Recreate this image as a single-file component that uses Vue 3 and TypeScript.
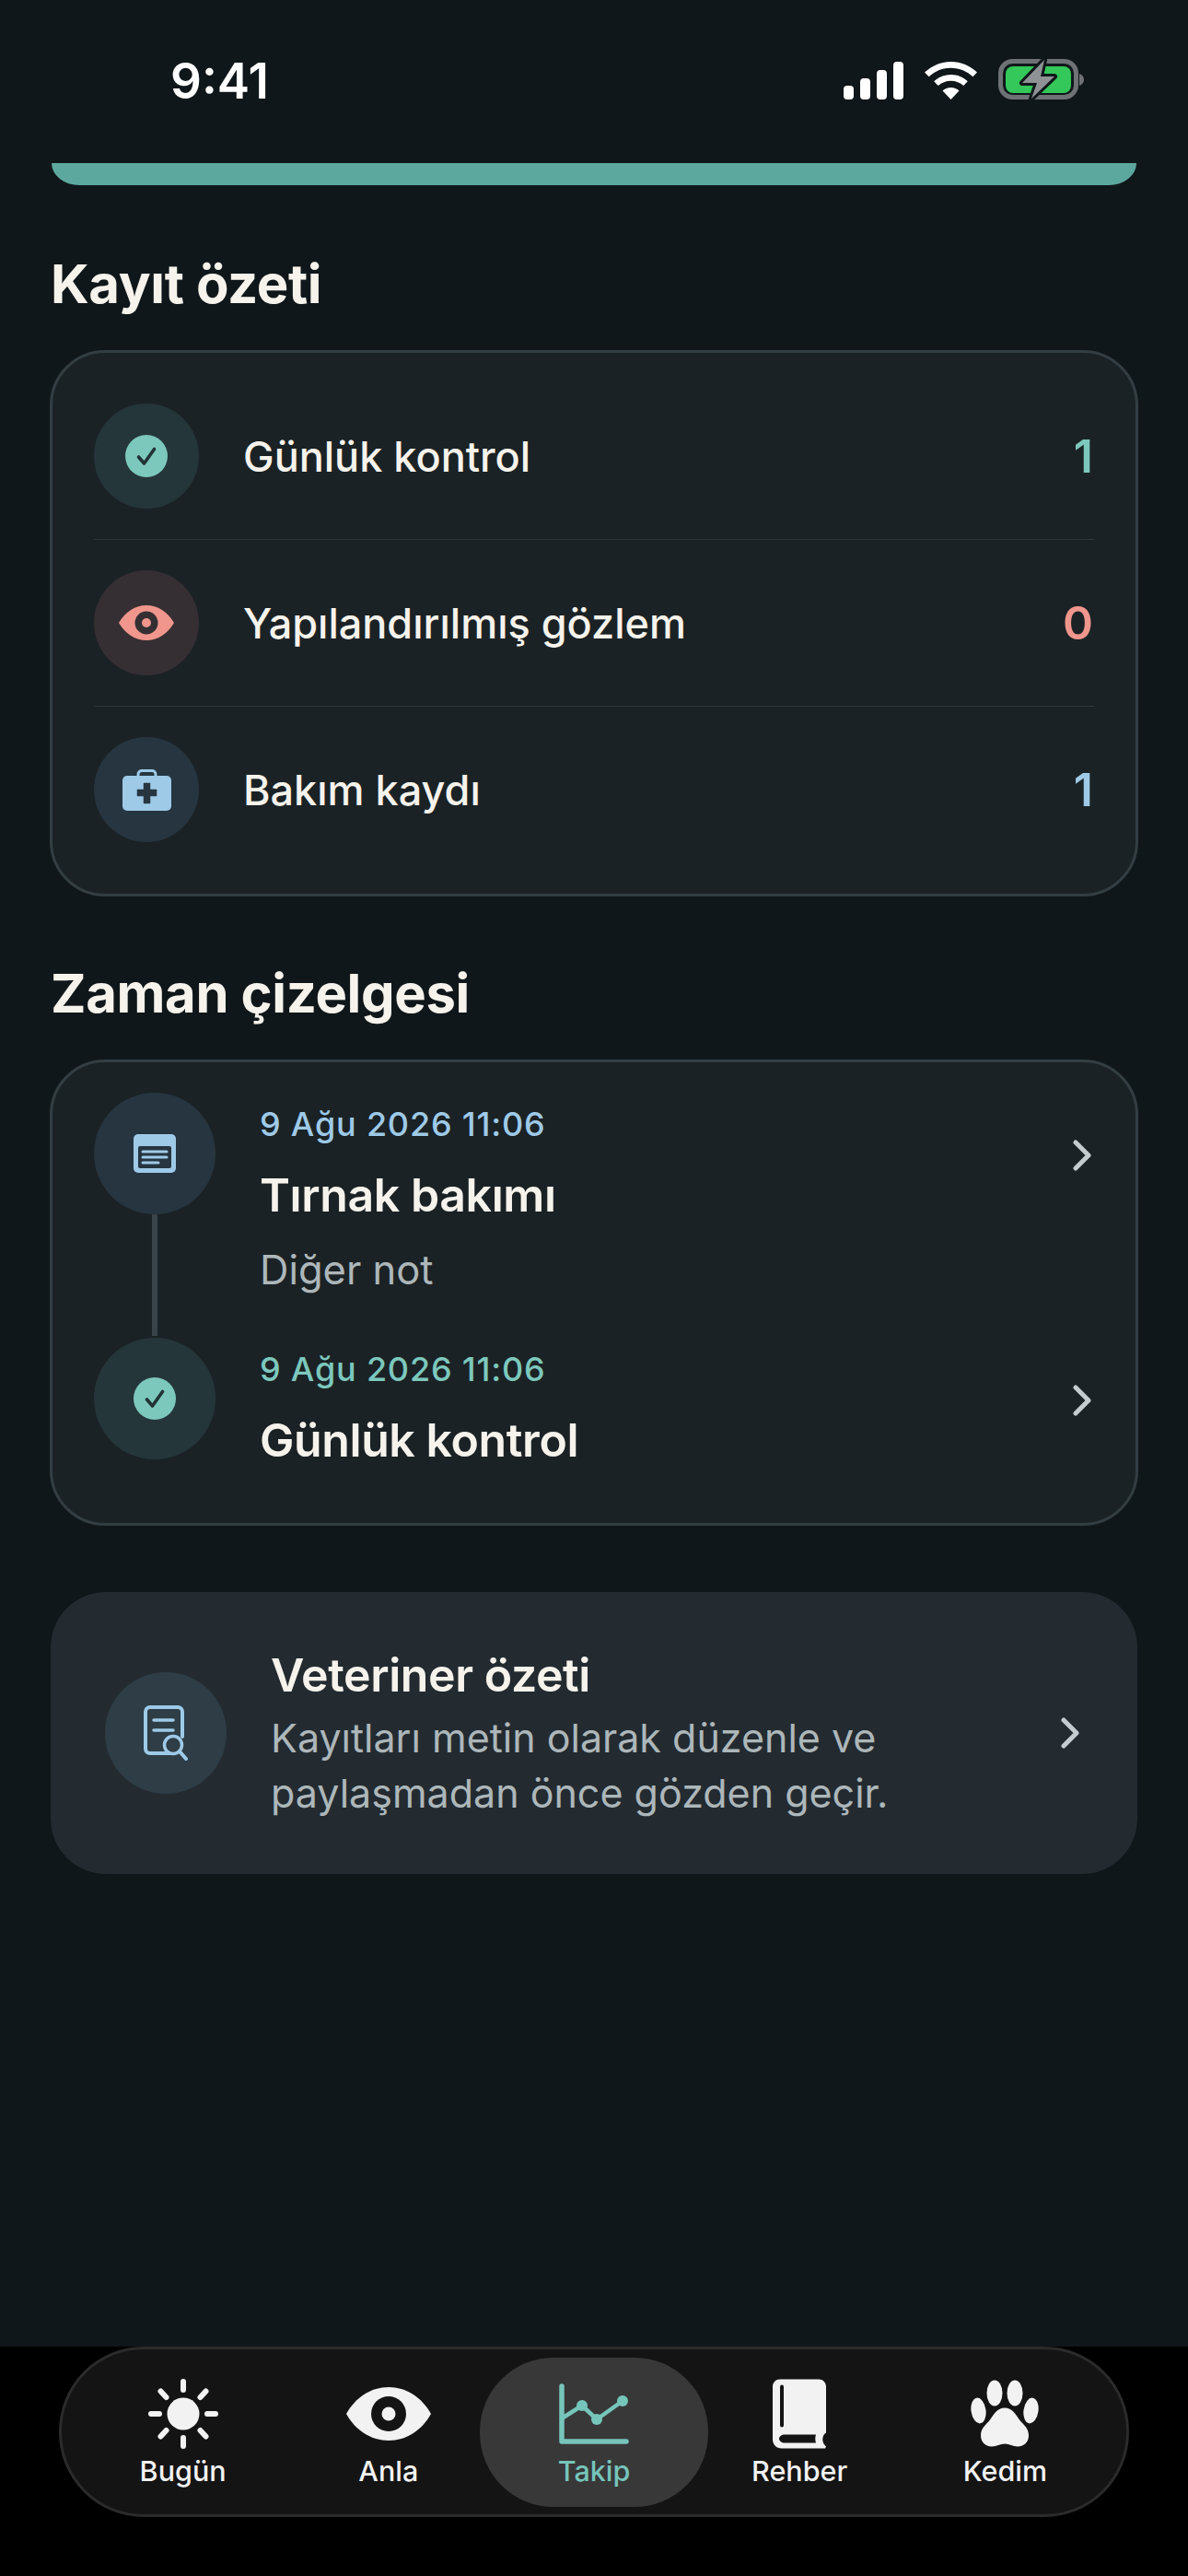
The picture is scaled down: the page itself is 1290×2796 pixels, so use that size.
<script setup lang="ts">
const summary = [
  { label: 'Günlük kontrol', count: 1, tone: 'teal', icon: 'check' },
  { label: 'Yapılandırılmış gözlem', count: 0, tone: 'red', icon: 'eye' },
  { label: 'Bakım kaydı', count: 1, tone: 'blue', icon: 'case' },
]
</script>

<template>
  <div class="page">
    <header class="status">
      <span class="time">9:41</span>
      <div class="status-icons">
        <svg class="signal" width="65" height="41" viewBox="0 0 65 41">
          <rect x="0" y="26" width="11" height="15" rx="4" />
          <rect x="18" y="18" width="11" height="23" rx="4" />
          <rect x="36" y="9" width="11" height="32" rx="4" />
          <rect x="54" y="0" width="11" height="41" rx="4" />
        </svg>
        <svg class="wifi" width="57" height="41" viewBox="0 0 57 41">
          <path d="M28.500 0C17.500 0 7.600 4.300 0 11.500L4.600 16.300C10.800 10.400 19.200 6.800 28.500 6.800S46.200 10.400 52.400 16.300L57 11.500C49.400 4.300 39.500 0 28.500 0Z" />
          <path d="M28.500 14C21.400 14 15 16.800 10.200 21.300L14.800 26.100C18.400 22.700 23.200 20.700 28.500 20.700S38.600 22.700 42.200 26.100L46.800 21.300C42 16.800 35.600 14 28.500 14Z" />
          <path d="M28.500 28C25 28 21.900 29.300 19.500 31.500L28.500 41L37.500 31.500C35.100 29.300 32 28 28.500 28Z" />
        </svg>
        <svg class="battery" width="93" height="44" viewBox="0 0 93 44">
          <rect x="2.500" y="2.500" width="82" height="39" rx="13" fill="none" stroke="#6f7274" stroke-width="5" />
          <rect x="8" y="8" width="71" height="29" rx="8" fill="#34c759" />
          <path d="M88 16C91 17 93 19.500 93 22.500S91 28 88 29Z" fill="#6f7274" />
          <path d="M50 1L26 26H42L36 43L61 19H46Z" fill="#8f9294" stroke="#10171a" stroke-width="6" stroke-linejoin="round" paint-order="stroke" />
        </svg>
      </div>
    </header>

    <main class="content">
      <div class="hero-edge"></div>

      <h2 class="section-title">Kayıt özeti</h2>
      <section class="card summary">
        <div v-for="row in summary" :key="row.label" class="sum-row">
          <div class="sum-icon" :class="'bg-' + row.tone">
            <svg v-if="row.icon === 'check'" width="46" height="46" viewBox="0 0 46 46">
              <circle cx="23" cy="23" r="23" fill="#7cc8bd" />
              <path d="M14.500 24L20.500 31L31.500 15.500" fill="none" stroke="#223236" stroke-width="3.600" stroke-linecap="round" stroke-linejoin="round" />
            </svg>
            <svg v-else-if="row.icon === 'eye'" width="60" height="38" viewBox="0 0 60 38">
              <path d="M0 19C7 7 18 0 30 0S53 7 60 19C53 31 42 38 30 38S7 31 0 19Z" fill="#f0968c" />
              <circle cx="30" cy="19" r="12.500" fill="#352f33" />
              <circle cx="30" cy="19" r="5" fill="#f0968c" />
            </svg>
            <svg v-else width="53" height="45" viewBox="0 0 53 45">
              <path d="M17 9V5.500C17 3 19 1.500 21 1.500H32C34 1.500 36 3 36 5.500V9" fill="none" stroke="#9ecae8" stroke-width="3" />
              <rect x="0" y="7" width="53" height="38" rx="5" fill="#9ecae8" />
              <path d="M23 15H30V22H37V29H30V37H23V29H16V22H23Z" fill="#263540" stroke="#263540" stroke-width="0.500" stroke-linejoin="round" />
            </svg>
          </div>
          <span class="sum-label">{{ row.label }}</span>
          <span class="sum-count" :class="'fg-' + row.tone">{{ row.count }}</span>
        </div>
      </section>

      <h2 class="section-title">Zaman çizelgesi</h2>
      <section class="card timeline">
        <div class="tl-row tl-first">
          <div class="tl-rail">
            <div class="tl-icon bg-blue">
              <svg width="46" height="42" viewBox="0 0 46 42">
                <rect x="0" y="0" width="46" height="42" rx="5" fill="#9ecae8" />
                <rect x="5" y="13" width="36" height="24" rx="2" fill="#263540" />
                <path d="M10 19H36M10 25H36M10 31H27" stroke="#9ecae8" stroke-width="3" stroke-linecap="round" />
              </svg>
            </div>
            <div class="tl-line"></div>
          </div>
          <div class="tl-text">
            <div class="tl-date fg-blue">9 Ağu 2026 11:06</div>
            <div class="tl-title">Tırnak bakımı</div>
            <div class="tl-sub">Diğer not</div>
          </div>
          <svg class="chevron" width="22" height="34" viewBox="0 0 22 34"><path d="M4 3L18 17L4 31" /></svg>
        </div>
        <div class="tl-row">
          <div class="tl-rail">
            <div class="tl-icon bg-teal">
              <svg width="46" height="46" viewBox="0 0 46 46">
                <circle cx="23" cy="23" r="23" fill="#7cc8bd" />
                <path d="M14.500 24L20.500 31L31.500 15.500" fill="none" stroke="#223236" stroke-width="3.600" stroke-linecap="round" stroke-linejoin="round" />
              </svg>
            </div>
          </div>
          <div class="tl-text">
            <div class="tl-date fg-teal">9 Ağu 2026 11:06</div>
            <div class="tl-title">Günlük kontrol</div>
          </div>
          <svg class="chevron" width="22" height="34" viewBox="0 0 22 34"><path d="M4 3L18 17L4 31" /></svg>
        </div>
      </section>

      <section class="vet">
        <div class="vet-icon">
          <svg width="48" height="60" viewBox="0 0 48 60">
            <path d="M30 52H7C4 52 2 50 2 47V7C2 4 4 2 7 2H37C40 2 42 4 42 7V34" fill="none" stroke="#9ecae8" stroke-width="4" stroke-linecap="round" />
            <path d="M11 16H32M11 27H32" stroke="#9ecae8" stroke-width="3.500" stroke-linecap="round" />
            <circle cx="32" cy="43" r="9.500" fill="#2e3d46" stroke="#9ecae8" stroke-width="3.500" />
            <path d="M39 50L46 58" stroke="#9ecae8" stroke-width="4" stroke-linecap="round" />
          </svg>
        </div>
        <div class="vet-text">
          <div class="vet-title">Veteriner özeti</div>
          <div class="vet-desc">Kayıtları metin olarak düzenle ve paylaşmadan önce gözden geçir.</div>
        </div>
        <svg class="chevron" width="22" height="34" viewBox="0 0 22 34"><path d="M4 3L18 17L4 31" /></svg>
      </section>
    </main>

    <nav class="tabbar">
      <div class="tabs">
        <div class="tab">
          <svg width="76" height="76" viewBox="0 0 76 76" class="ic">
            <circle cx="38" cy="38" r="17.500" fill="#f2f2f2" />
            <path d="M38 3V12M38 64V73M3 38H12M64 38H73M13.500 13.500L19.500 20M56.500 56L62.500 62.500M62.500 13.500L56.500 20M19.500 56L13.500 62.500" stroke="#f2f2f2" stroke-width="6" stroke-linecap="round" />
          </svg>
          <span>Bugün</span>
        </div>
        <div class="tab">
          <svg width="92" height="58" viewBox="0 0 92 58" class="ic">
            <path d="M0 29C10 11 27 0 46 0S82 11 92 29C82 47 65 58 46 58S10 47 0 29Z" fill="#f2f2f2" />
            <circle cx="46" cy="29" r="19" fill="#141414" />
            <circle cx="46" cy="29" r="7.500" fill="#f2f2f2" />
          </svg>
          <span>Anla</span>
        </div>
        <div class="tab active">
          <svg width="76" height="66" viewBox="0 0 76 66" class="ic">
            <path d="M3 3V63H73" fill="none" stroke="#76c5bb" stroke-width="5.500" stroke-linecap="round" stroke-linejoin="round" />
            <path d="M3 38L25 24L41 39L69 19" fill="none" stroke="#76c5bb" stroke-width="4.500" stroke-linecap="round" stroke-linejoin="round" />
            <circle cx="25" cy="24" r="6" fill="#76c5bb" />
            <circle cx="41" cy="39" r="6" fill="#76c5bb" />
            <circle cx="69" cy="19" r="6" fill="#76c5bb" />
          </svg>
          <span>Takip</span>
        </div>
        <div class="tab">
          <svg width="58" height="75" viewBox="0 0 58 75" class="ic">
            <path d="M8 0H50C54.500 0 58 3.500 58 8V58C53 61 53 69 58 73L57 75H10C4 75 0 71 0 65V8C0 3.500 3.500 0 8 0Z" fill="#f2f2f2" />
            <rect x="8" y="6" width="4" height="46" rx="2" fill="#141414" />
            <path d="M13 60H47C46 63 46 66 47 69H13C10 69 7 67 7 64.500S10 60 13 60Z" fill="#141414" />
          </svg>
          <span>Rehber</span>
        </div>
        <div class="tab">
          <svg width="74" height="73" viewBox="0 0 74 73" class="ic">
            <ellipse cx="8.500" cy="33" rx="8" ry="14" fill="#f2f2f2" transform="rotate(-8 8.500 33)" />
            <ellipse cx="26" cy="14" rx="8.500" ry="14" fill="#f2f2f2" />
            <ellipse cx="48" cy="14" rx="8.500" ry="14" fill="#f2f2f2" />
            <ellipse cx="65.500" cy="33" rx="8" ry="14" fill="#f2f2f2" transform="rotate(8 65.500 33)" />
            <path d="M37 30C45 30 49 37 53 43C58 49 63 52 63 60C63 68 57 72 51 72C46 72 42 69 37 69S28 72 23 72C17 72 11 68 11 60C11 52 16 49 21 43C25 37 29 30 37 30Z" fill="#f2f2f2" />
          </svg>
          <span>Kedim</span>
        </div>
      </div>
    </nav>
  </div>
</template>

<style>
html, body { margin: 0; background: #10171a; }
</style>

<style scoped>
.page {
  width: 1290px;
  height: 2796px;
  display: flex;
  flex-direction: column;
  background: #10171a;
  font-family: Inter, "Noto Sans", sans-serif;
  color: #f6f3ec;
  overflow: hidden;
}
.status {
  height: 177px;
  flex: none;
  position: relative;
  display: flex;
  justify-content: space-between;
  padding: 66px 113px 0 185px;
  box-sizing: border-box;
}
.time {
  font-size: 53px;
  line-height: 44px;
  font-weight: 600;
  color: #fff;
}
.status-icons { display: flex; align-items: flex-end; height: 42px; }
.signal, .wifi { fill: #fff; }
.wifi { margin-left: 23px; }
.battery { margin-left: 23px; }

.content { flex: 1; padding: 0 55px; }
.hero-edge {
  height: 24px;
  margin: 0 1px;
  background: #5ca89f;
  border-radius: 0 0 30px 30px / 0 0 24px 24px;
}
.section-title {
  margin: 71px 0 36px;
  font-size: 58px;
  line-height: 72px;
  font-weight: 700;
  letter-spacing: -0.35px;
  color: #f6f3ec;
}
.card {
  background: #1b2225;
  border: 3px solid #333e43;
  border-radius: 60px;
  box-sizing: border-box;
  margin: 0 -1px;
}
.summary { padding: 22px 45px 23px; margin-bottom: -2px; }
.sum-row {
  height: 180px;
  display: flex;
  align-items: center;
}
.sum-row + .sum-row { border-top: 1px solid #2f383c; }
.sum-icon {
  width: 114px;
  height: 114px;
  border-radius: 50%;
  display: flex;
  align-items: center;
  justify-content: center;
  flex: none;
}
.bg-teal { background: #25363a; }
.bg-red { background: #352f33; }
.bg-blue { background: #263540; }
.fg-teal { color: #7cc8bd; }
.fg-red { color: #f0968c; }
.fg-blue { color: #9ecae8; }
.sum-label {
  flex: 1;
  margin-left: 48px;
  font-size: 45px;
  font-weight: 500;
}
.sum-count {
  font-size: 50px;
  font-weight: 600;
  margin-right: 1px;
}

.timeline { padding: 33px 47px 60px 45px; }
.tl-row { display: flex; align-items: flex-start; }
.tl-first { height: 266px; }
.tl-rail {
  width: 132px;
  flex: none;
  display: flex;
  flex-direction: column;
  align-items: center;
}
.tl-icon {
  width: 132px;
  height: 132px;
  border-radius: 50%;
  display: flex;
  align-items: center;
  justify-content: center;
}
.tl-line { width: 6px; height: 132px; background: #39444a; }
.tl-text { flex: 1; margin-left: 48px; padding-top: 12px; }
.tl-date {
  font-size: 36px;
  line-height: 44px;
  font-weight: 500;
  letter-spacing: 0.8px;
}
.tl-title {
  margin-top: 25px;
  font-size: 50px;
  line-height: 60px;
  font-weight: 600;
  letter-spacing: -0.4px;
}
.tl-sub {
  margin-top: 23px;
  font-size: 43.500px;
  line-height: 56px;
  color: #adb7ba;
}
.chevron { flex: none; fill: none; stroke: #c3cccf; stroke-width: 5; stroke-linecap: round; stroke-linejoin: round; }
.tl-row .chevron { margin-top: 51px; }

.vet {
  margin-top: 72px;
  height: 306px;
  box-sizing: border-box;
  background: #232b31;
  border-radius: 60px;
  display: flex;
  align-items: center;
  padding: 0 62px 0 59px;
}
.vet-icon {
  width: 132px;
  height: 132px;
  border-radius: 50%;
  background: #2e3d46;
  display: flex;
  align-items: center;
  justify-content: center;
  flex: none;
}
.vet-text { flex: 1; margin-left: 48px; padding-top: 1px; }
.vet-title { font-size: 50px; line-height: 60px; font-weight: 600; letter-spacing: -0.4px; margin-bottom: 8px; }
.vet-desc { font-size: 43px; line-height: 60px; color: #adb7ba; width: 760px; }

.tabbar {
  flex: none;
  height: 249px;
  background: #000;
  padding: 0 64px;
  box-sizing: border-box;
}
.tabs {
  height: 185px;
  border: 3px solid #2b2b2b;
  border-radius: 92px;
  background: #141414;
  box-sizing: border-box;
  display: flex;
  padding: 0 20px;
}
.tab {
  flex: 1;
  position: relative;
  display: flex;
  flex-direction: column;
  align-items: center;
  color: #f2f2f2;
  font-size: 30.500px;
  font-weight: 500;
  line-height: 40px;
  padding-top: 32px;
  box-sizing: border-box;
}
.tab .ic { height: 76px; position: relative; }
.tab span { position: relative; margin-top: 4px; }
.tab.active { color: #76c5bb; }
.tab.active::before {
  content: "";
  position: absolute;
  left: -12px;
  right: -12px;
  top: 9px;
  height: 162px;
  background: #383838;
  border-radius: 80px;
}
</style>
